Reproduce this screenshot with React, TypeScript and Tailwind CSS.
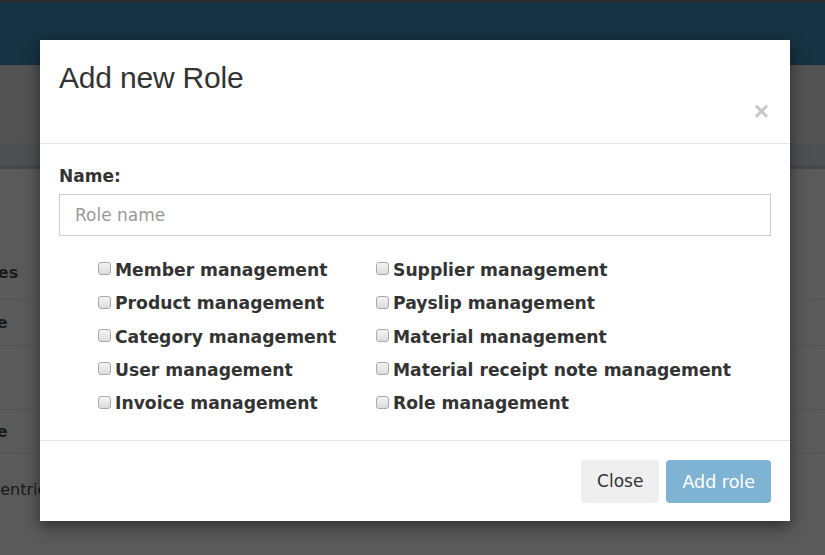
import React from "react";

const leftPerms = [
  "Member management",
  "Product management",
  "Category management",
  "User management",
  "Invoice management",
];

const rightPerms = [
  "Supplier management",
  "Payslip management",
  "Material management",
  "Material receipt note management",
  "Role management",
];

const Perm: React.FC<{ label: string }> = ({ label }) => (
  <label className="flex items-center h-[33.4px] text-[17.2px] font-bold text-[#333] whitespace-nowrap">
    <span className="w-[13px] h-[13px] mr-[4px] -mt-[4px] rounded-[3px] border border-[#a9a9a9] bg-gradient-to-b from-[#f4f4f4] to-[#dcdcdc]" />
    {label}
  </label>
);

const App: React.FC = () => {
  return (
    <div className="relative w-[825px] h-[555px] overflow-hidden bg-[#5a5a5a] font-['DejaVu_Sans',Verdana,sans-serif]">
      {/* page behind the overlay */}
      <div className="h-[2px] bg-[#2a2a2a]" />
      <div className="h-[63px] bg-[#173242]" />
      <div className="h-[78px] bg-[#535353]" />
      <div className="h-[22px] bg-[#4e5153]" />
      <div className="h-[4px] bg-[#484848]" />
      <div className="flex flex-col text-[16px] font-bold text-[#1a1a1a]">
        <div className="h-[13px]" />
        <div className="h-[118px] border-b border-[#535353] flex items-end pb-[14px]">
          <span className="-ml-[31px]">Roles</span>
        </div>
        <div className="h-[46px] border-b border-[#535353] flex items-center">
          <span className="-ml-[44px]">Name</span>
        </div>
        <div className="h-[64px] border-b border-[#535353]" />
        <div className="h-[44px] border-b border-[#535353] flex items-center">
          <span className="-ml-[44px]">Name</span>
        </div>
        <div className="h-[72px] flex items-center font-normal">
          <span className="-ml-[48px]">Show entries</span>
        </div>
      </div>

      {/* modal */}
      <div className="absolute left-[40px] top-[40px] w-[750px] bg-white shadow-[0_5px_15px_rgba(0,0,0,0.5)]">
        <div className="h-[104px] border-b border-[#e5e5e5] px-[19px] pt-[20px] relative">
          <h2 className="text-[30px] leading-[36px] text-[#333] font-['Liberation_Sans',Arial,sans-serif] tracking-[-0.2px]">
            Add new Role
          </h2>
          <span className="absolute right-[21px] top-[58px] text-[26px] leading-none font-bold text-[#c7c7c7] font-['Liberation_Sans',Arial,sans-serif]">
            ×
          </span>
        </div>

        <div className="px-[19px] pt-[21px] pb-[19px]">
          <div className="text-[17px] font-bold text-[#333] mb-[7px] leading-[22px]">
            Name:
          </div>
          <input
            type="text"
            placeholder="Role name"
            className="block w-full h-[42px] border border-[#ccd] pl-[15px] pr-[15px] text-[17px] placeholder:text-[#999] focus:outline-none"
          />
          <div className="flex pl-[39px] pt-[18px]">
            <div className="w-[278px] flex flex-col">
              {leftPerms.map((p) => (
                <Perm key={p} label={p} />
              ))}
            </div>
            <div className="flex flex-col">
              {rightPerms.map((p) => (
                <Perm key={p} label={p} />
              ))}
            </div>
          </div>
        </div>

        <div className="border-t border-[#e5e5e5] h-[81px] flex items-center justify-end gap-[7px] px-[19px] pt-[2px]">
          <button type="button" className="h-[43px] px-[16px] rounded-[4px] bg-[#efefef] text-[#333] text-[17px]">
            Close
          </button>
          <button type="button" className="h-[43px] px-[16px] rounded-[4px] bg-[#7fb3d3] text-white text-[17.5px]">
            Add role
          </button>
        </div>
      </div>
    </div>
  );
};

export default App;
